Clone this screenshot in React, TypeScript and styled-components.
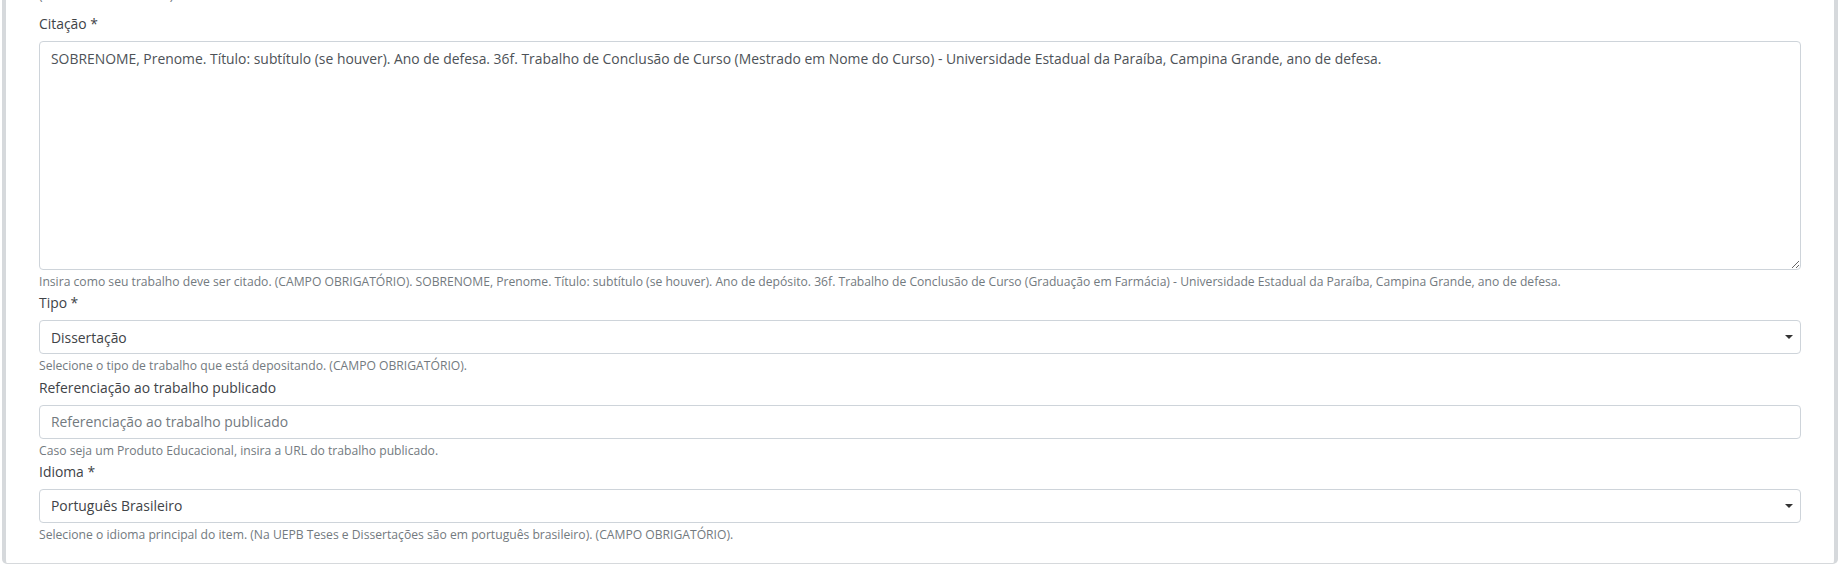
import React from "react";
import styled, { createGlobalStyle } from "styled-components";

const GlobalStyle = createGlobalStyle`
  html, body { margin: 0; padding: 0; background: #ffffff; overflow: hidden; }
  body { font-family: "Open Sans", "Noto Sans", sans-serif; color: #3a3d40; }
  * { box-sizing: border-box; }
`;

const Page = styled.div`
  width: 1846px;
  height: 564px;
  padding: 0 8px 0 2px;
  overflow: hidden;
`;

const Card = styled.section`
  border: solid #d6d9dc;
  border-width: 0 4px 1px 4px;
  border-radius: 0 0 5px 5px;
  background: #ffffff;
  padding: 0 33px 19px;
  display: flex;
  flex-direction: column;
  gap: 1.2px;
`;

const Group = styled.div`
  display: flex;
  flex-direction: column;
`;

const Label = styled.label`
  font-size: 13.9px;
  line-height: 21px;
  color: #404347;
  margin-bottom: 7px;
`;

const Help = styled.small<{ $lead?: boolean }>`
  display: block;
  font-size: 12.15px;
  line-height: 18px;
  color: #737a80;
  margin-top: ${(p) => (p.$lead ? "-13px" : "3px")};
  margin-bottom: ${(p) => (p.$lead ? "7px" : "0")};
  white-space: nowrap;
`;

const controlBase = `
  width: 100%;
  font-family: "Open Sans", "Noto Sans", sans-serif;
  font-size: 13.9px;
  line-height: 21px;
  border: 1px solid #ced4da;
  border-radius: 4px;
  background: #ffffff;
  outline: none;
  margin: 0;
`;

const TextArea = styled.textarea`
  ${controlBase}
  height: 229px;
  padding: 6px 11px;
  color: #4d5257;
  resize: vertical;
  display: block;
`;

const TextInput = styled.input`
  ${controlBase}
  height: 34px;
  padding: 5px 11px;
  color: #4d5257;
  &::placeholder { color: #737a80; opacity: 1; }
`;

const SelectWrap = styled.div`
  position: relative;
  display: flex;
`;

const Select = styled.select`
  ${controlBase}
  height: 34px;
  padding: 5px 30px 5px 11px;
  color: #404347;
  appearance: none;
  -webkit-appearance: none;
`;

const Caret = styled.span`
  position: absolute;
  right: 8px;
  top: 50%;
  margin-top: -2px;
  width: 0;
  height: 0;
  border-top: 4px solid #333;
  border-left: 4px solid transparent;
  border-right: 4px solid transparent;
  pointer-events: none;
`;

const citation =
  "SOBRENOME, Prenome. Título: subtítulo (se houver). Ano de defesa. 36f. Trabalho de Conclusão de Curso (Mestrado em Nome do Curso) - Universidade Estadual da Paraíba, Campina Grande, ano de defesa.";

function SelectField({ value }: { value: string }) {
  return (
    <SelectWrap>
      <Select defaultValue={value}>
        <option value={value}>{value}</option>
      </Select>
      <Caret />
    </SelectWrap>
  );
}

export default function App() {
  return (
    <Page>
      <GlobalStyle />
      <Card>
        <Help $lead>(CAMPO OBRIGATÓRIO).</Help>
        <Group>
          <Label>Citação *</Label>
          <TextArea defaultValue={citation} />
          <Help>
            Insira como seu trabalho deve ser citado. (CAMPO OBRIGATÓRIO). SOBRENOME, Prenome. Título: subtítulo (se
            houver). Ano de depósito. 36f. Trabalho de Conclusão de Curso (Graduação em Farmácia) - Universidade Estadual
            da Paraíba, Campina Grande, ano de defesa.
          </Help>
        </Group>
        <Group>
          <Label>Tipo *</Label>
          <SelectField value="Dissertação" />
          <Help>Selecione o tipo de trabalho que está depositando. (CAMPO OBRIGATÓRIO).</Help>
        </Group>
        <Group>
          <Label>Referenciação ao trabalho publicado</Label>
          <TextInput placeholder="Referenciação ao trabalho publicado" />
          <Help>Caso seja um Produto Educacional, insira a URL do trabalho publicado.</Help>
        </Group>
        <Group>
          <Label>Idioma *</Label>
          <SelectField value="Português Brasileiro" />
          <Help>
            Selecione o idioma principal do item. (Na UEPB Teses e Dissertações são em português brasileiro). (CAMPO
            OBRIGATÓRIO).
          </Help>
        </Group>
      </Card>
    </Page>
  );
}
